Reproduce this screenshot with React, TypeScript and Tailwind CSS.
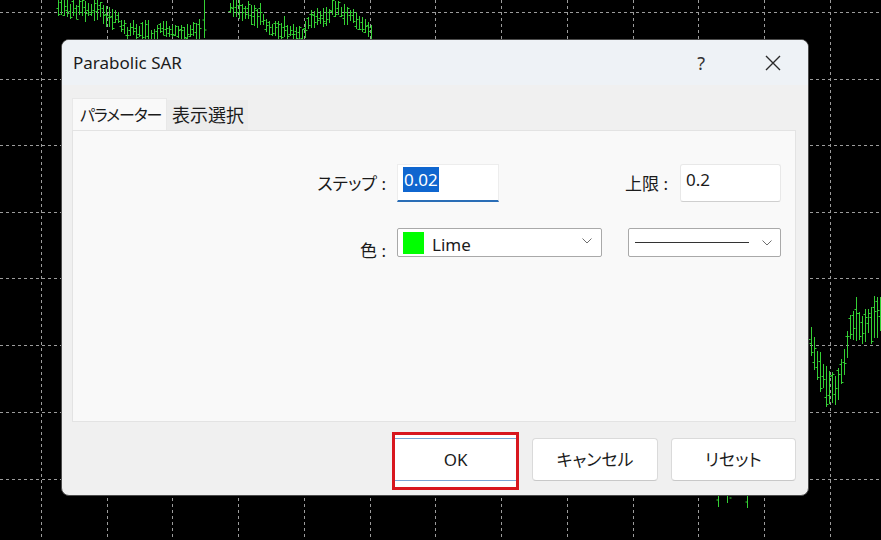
import React from "react";

const VX = [41, 107, 172, 238, 304, 370, 435, 501, 567, 633, 698, 764, 830];
const HY = [12, 79, 145, 212, 278, 345, 412, 479];

function makeRng(seed: number) {
  let s = seed;
  return () => {
    s = (s * 1664525 + 1013904223) % 4294967296;
    return s / 4294967296;
  };
}

function interp(pts: [number, number][], x: number) {
  if (x <= pts[0][0]) return pts[0][1];
  for (let i = 1; i < pts.length; i++) {
    if (x <= pts[i][0]) {
      const [x0, y0] = pts[i - 1];
      const [x1, y1] = pts[i];
      return y0 + ((y1 - y0) * (x - x0)) / (x1 - x0);
    }
  }
  return pts[pts.length - 1][1];
}

function barsPath(
  x0: number,
  x1: number,
  step: number,
  pts: [number, number][],
  minH: number,
  maxH: number,
  seed: number
) {
  const r = makeRng(seed);
  let d = "";
  for (let x = x0; x <= x1; x += step) {
    const c = interp(pts, x) + (r() - 0.5) * 8;
    const h = minH + r() * (maxH - minH);
    const hi = Math.round(c - h / 2);
    const lo = Math.round(c + h / 2);
    const o = Math.round(hi + r() * (lo - hi));
    const cl = Math.round(hi + r() * (lo - hi));
    const px = x + 0.5;
    d += `M${px} ${hi}V${lo}M${px - 2} ${o + 0.5}H${px}M${px} ${cl + 0.5}H${px + 2}`;
  }
  return d;
}

const topA = barsPath(
  58,
  200,
  3,
  [
    [58, 8],
    [80, 10],
    [100, 12],
    [118, 20],
    [126, 30],
    [150, 32],
    [175, 31],
    [200, 34],
  ],
  10,
  22,
  7
);
const topB = barsPath(
  230,
  372,
  3,
  [
    [230, 10],
    [250, 12],
    [262, 18],
    [272, 28],
    [290, 32],
    [300, 34],
    [312, 20],
    [325, 14],
    [340, 8],
    [352, 18],
    [362, 28],
    [372, 32],
  ],
  10,
  22,
  19
);
const right = barsPath(
  808,
  881,
  3,
  [
    [808, 330],
    [814, 355],
    [822, 375],
    [830, 392],
    [838, 385],
    [844, 365],
    [849, 330],
    [856, 322],
    [864, 328],
    [872, 322],
    [881, 310],
  ],
  22,
  44,
  33
);

function Chart() {
  return (
    <svg
      className="absolute inset-0"
      width={881}
      height={540}
      viewBox="0 0 881 540"
    >
      <g stroke="#9c9c9c" strokeWidth={1} strokeDasharray="3 3">
        {VX.map((x) => (
          <line key={"v" + x} x1={x + 0.5} y1={0} x2={x + 0.5} y2={540} />
        ))}
        {HY.map((y) => (
          <line key={"h" + y} x1={0} y1={y + 0.5} x2={881} y2={y + 0.5} />
        ))}
      </g>
      <g stroke="#34d034" strokeWidth={1} fill="none">
        <path d={topA} />
        <path d={topB} />
        <path d={right} />
        <path d="M204.5 0V38M202.5 20H204.5M204.5 30H206.5" />
        <path d="M718.5 490V507M716.5 500H718.5M727.5 490V503M729.5 498H731.5M747.5 490V508M745.5 502H747.5" />
      </g>
    </svg>
  );
}

function Chevron() {
  return (
    <svg width="10" height="6" viewBox="0 0 10 6" fill="none">
      <path d="M0.5 0.5L5 5L9.5 0.5" stroke="#6e6e6e" strokeWidth="1" />
    </svg>
  );
}

export default function App() {
  return (
    <div className="relative w-[881px] h-[540px] overflow-hidden bg-black font-['Noto_Sans','Noto_Sans_CJK_JP',sans-serif] [font-feature-settings:'palt']">
      <Chart />
      <div className="absolute left-[61px] top-[39px] w-[748px] h-[457px] rounded-[8px] border border-[#4c4c4c] bg-[#f0f0f0] overflow-hidden flex flex-col text-[#1b1b1b]">
        {/* Title bar */}
        <div className="h-[45px] shrink-0 bg-[#eef2f6] flex items-center pl-[11px] pr-[27px]">
          <span className="text-[17px] leading-none">Parabolic SAR</span>
          <span className="ml-auto text-[18px] leading-none text-[#333] font-['Noto_Sans',sans-serif]">
            ?
          </span>
          <svg
            className="ml-[60px]"
            width="16"
            height="16"
            viewBox="0 0 16 16"
            fill="none"
          >
            <path
              d="M1 1L15 15M15 1L1 15"
              stroke="#2a2a2a"
              strokeWidth="1.4"
            />
          </svg>
        </div>

        {/* Body */}
        <div className="flex-1 flex flex-col pl-[10px] pr-[12px] pt-[13px]">
          {/* Tabs */}
          <div className="h-[32px] flex items-end">
            <div className="h-[32px] w-[95px] bg-[#f9f9f9] border-t border-l border-r border-[#e8e8e8] flex items-center pl-[7px] text-[16px] tracking-[-1.1px] leading-none whitespace-nowrap">
              パラメーター
            </div>
            <div className="h-[30px] w-[81px] bg-[#ececec] flex items-center pl-[5px] text-[18px] leading-none whitespace-nowrap">
              表示選択
            </div>
          </div>

          {/* Panel */}
          <div className="h-[292px] bg-[#f9f9f9] border border-[#e3e3e3] pt-[33px]">
            <div className="flex items-center h-[38px]">
              <div className="w-[313px] text-right text-[17px] leading-none whitespace-nowrap">
                ステップ :
              </div>
              <div className="ml-[11px] w-[102px] h-[38px] bg-white border border-[#ededed] border-b-2 border-b-[#2a6db6] pt-[2px] pl-[5px] flex items-start">
                <span className="bg-[#0f66cf] text-white text-[17px] leading-[25px] px-[1px]">
                  0.02
                </span>
              </div>
              <div className="w-[169px] text-right text-[17px] leading-none whitespace-nowrap">
                上限 :
              </div>
              <div className="ml-[12px] w-[101px] h-[38px] bg-white border border-[#e8e8e8] border-b-[#cfcfcf] rounded-[3px] pt-[2px] pl-[5px] flex items-start">
                <span className="text-[17px] leading-[25px]">0.2</span>
              </div>
            </div>

            <div className="flex items-start mt-[26px] h-[29px]">
              <div className="w-[313px] text-right text-[17px] leading-[20px] pt-[13px] whitespace-nowrap">
                色 :
              </div>
              <div className="ml-[11px] w-[205px] h-[29px] bg-white border border-[#a9a9a9] rounded-[2px] flex items-center pl-[5px] pr-[9px]">
                <div className="w-[21px] h-[22px] bg-[#00ff00]" />
                <span className="ml-[8px] text-[17px] leading-none pt-[4px]">
                  Lime
                </span>
                <div className="ml-auto -mt-[4px]">
                  <Chevron />
                </div>
              </div>
              <div className="ml-[26px] w-[153px] h-[29px] bg-white border border-[#a9a9a9] rounded-[2px] flex items-center pl-[6px] pr-[8px]">
                <div className="w-[114px] h-[1px] bg-[#333]" />
                <div className="ml-auto">
                  <Chevron />
                </div>
              </div>
            </div>
          </div>

          {/* Buttons */}
          <div className="flex items-start mt-[10px] pl-[320px]">
            <div className="w-[128px] h-[58px] border-[3px] border-[#d8161e] bg-white pt-[3px]">
              <div className="w-full h-[43px] bg-white border-y border-[#79a5d5] flex items-center justify-center text-[17px] leading-none">
                OK
              </div>
            </div>
            <div className="ml-[13px] mt-[6px] w-[126px] h-[43px] bg-white border border-[#dadada] border-b-[#c8c8c8] rounded-[4px] flex items-center justify-center text-[17px] leading-none">
              キャンセル
            </div>
            <div className="ml-[13px] mt-[6px] w-[126px] h-[43px] bg-white border border-[#dadada] border-b-[#c8c8c8] rounded-[4px] flex items-center justify-center text-[17px] leading-none">
              リセット
            </div>
          </div>
        </div>
      </div>
    </div>
  );
}
